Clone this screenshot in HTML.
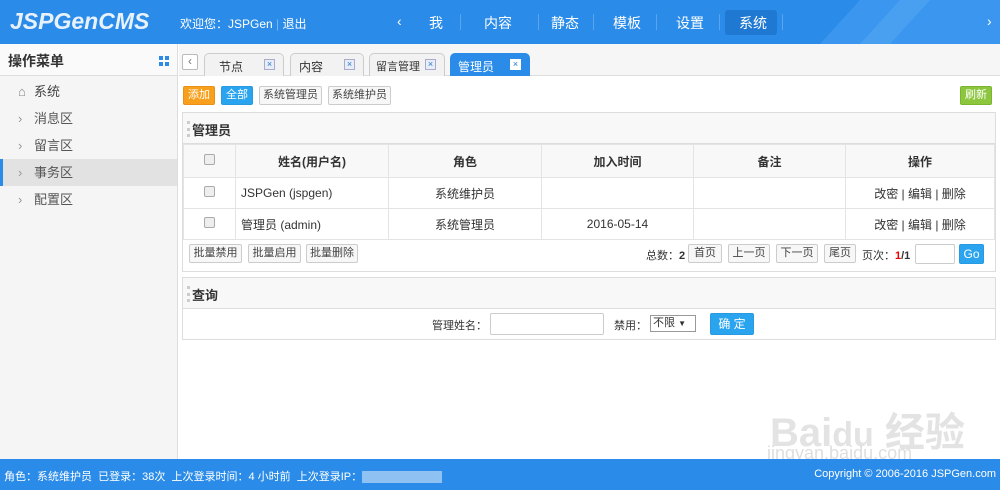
<!DOCTYPE html>
<html><head><meta charset="utf-8"><style>
*{margin:0;padding:0;box-sizing:border-box}
body{width:1000px;height:490px;overflow:hidden;font-family:"Liberation Sans","Noto Sans CJK SC",sans-serif;font-size:12px;color:#333;background:#fff;position:relative}
.hd{position:absolute;left:0;top:0;width:1000px;height:44px;background:#2a8be8;color:#fff;overflow:hidden}
.logo{position:absolute;left:10px;top:8px;font-size:23px;font-style:italic;font-weight:bold;color:#e8f2fc}
.nav a{position:absolute;top:13px;font-size:14px;color:#fff}
.sep{position:absolute;top:14px;width:1px;height:16px;background:#5ba5ee}
.side{position:absolute;left:0;top:44px;width:178px;height:415px;background:#f5f5f5;border-right:1px solid #ddd}
.sh{height:32px;border-bottom:1px solid #ddd;background:#fafafa;font-size:14px;font-weight:bold;padding:7px 8px}
.si{position:absolute;left:0;width:177px;height:27px;line-height:27px;padding-left:34px;font-size:13px;color:#555}
.si b{position:absolute;left:18px;font-weight:normal;color:#999}
.tabs{position:absolute;left:179px;top:44px;width:821px;height:32px;background:#f6f6f6;border-bottom:1px solid #ddd}
.tab{position:absolute;top:9px;height:23px;border:1px solid #ccc;border-bottom:none;border-radius:5px 5px 0 0;background:#f2f2f2;padding:4px 8px 0 30px;font-size:12px}
.tab i{position:absolute;right:8px;top:5px;width:11px;height:11px;border:1px solid #aac;background:#e8eef8;color:#27c;font-size:9px;line-height:9px;text-align:center;font-style:normal}
.btn{position:absolute;height:19px;line-height:17px;border:1px solid #ccc;border-radius:2px;background:#f7f7f7;font-size:11px;color:#444;text-align:center;white-space:nowrap;overflow:hidden}
.panel{position:absolute;left:182px;width:814px;border:1px solid #ddd}
.pt{height:31px;border-bottom:1px solid #ddd;background:#f8f8f8;font-size:13px;font-weight:bold;padding:7px 0 0 9px;position:relative}
.pt:before{content:"";position:absolute;left:4px;top:8px;height:16px;border-left:3px dotted #ccc}
table{border-collapse:collapse;width:100%}
td{border:1px solid #e4e4e4;text-align:center;height:31px;font-size:12px}
tr.h td{background:#f8f8f8;font-weight:bold;height:33px}
.cb{display:inline-block;width:11px;height:11px;border:1px solid #aaa;border-radius:2px;background:#eee}
.ft{position:absolute;left:0;top:459px;width:1000px;height:31px;background:#2a8be8;color:#fff;font-size:11px}
</style></head><body>
<div class="hd">
<svg style="position:absolute;left:800px;top:0" width="200" height="44"><polygon points="20,44 60,0 200,0 200,44" fill="#3a96ee"/><polygon points="60,44 100,0 130,0 90,44" fill="#4aa0f0"/></svg>
<div class="logo">JSPGenCMS</div>
<div style="position:absolute;left:180px;top:15px;font-size:12px">欢迎您：JSPGen <span style="color:#7bb8f2">|</span> 退出</div>
<div class="nav">
<a style="left:397px">‹</a><a style="left:429px">我</a><div class="sep" style="left:460px"></div>
<a style="left:484px">内容</a><div class="sep" style="left:538px"></div>
<a style="left:551px">静态</a><div class="sep" style="left:593px"></div>
<a style="left:613px">模板</a><div class="sep" style="left:656px"></div>
<a style="left:676px">设置</a><div class="sep" style="left:719px"></div>
<div style="position:absolute;left:725px;top:10px;width:52px;height:25px;background:#1f78d2;border-radius:3px"></div>
<a style="left:739px">系统</a><div class="sep" style="left:782px"></div>
<a style="left:987px">›</a></div>
</div>
<div class="side"><div class="sh">操作菜单<span style="position:absolute;left:159px;top:12px;width:10px;height:10px;background:linear-gradient(#fff,#fff) 4px 0/2px 10px no-repeat,linear-gradient(#fff,#fff) 0 4px/10px 2px no-repeat,#2a8be8"></span></div>
<div class="si" style="top:34px;color:#444"><b style="color:#888">⌂</b>系统</div>
<div class="si" style="top:61px"><b>›</b>消息区</div>
<div class="si" style="top:88px"><b>›</b>留言区</div>
<div class="si" style="top:115px;background:#e2e2e2;border-left:3px solid #2a8be8;padding-left:31px"><b style="left:15px">›</b>事务区</div>
<div class="si" style="top:142px"><b>›</b>配置区</div>
</div>
<div class="tabs">
<div style="position:absolute;left:3px;top:10px;width:16px;height:16px;border:1px solid #bbb;border-radius:2px;background:#fff;text-align:center;line-height:13px;color:#777">‹</div>
<div class="tab" style="left:25px;width:80px;padding-left:14px">节点<i>×</i></div>
<div class="tab" style="left:111px;width:74px;padding-left:8px">内容<i>×</i></div>
<div class="tab" style="left:190px;width:76px;padding-left:6px;font-size:11px">留言管理<i>×</i></div>
<div class="tab" style="left:271px;width:80px;padding-left:7px;background:#2a8be8;border-color:#2a8be8;color:#fff">管理员<i style="background:#fff;border-color:#fff">×</i></div>
</div>
<div class="btn" style="left:183px;top:86px;width:32px;background:#f8a01c;border-color:#e8901a;color:#fff">添加</div>
<div class="btn" style="left:221px;top:86px;width:32px;background:#2aa4ee;border-color:#2a9ae0;color:#fff">全部</div>
<div class="btn" style="left:259px;top:86px;width:63px">系统管理员</div>
<div class="btn" style="left:328px;top:86px;width:63px">系统维护员</div>
<div class="btn" style="left:960px;top:86px;width:32px;background:#8cc63e;border-color:#7ab530;color:#fff">刷新</div>
<div class="panel" style="top:112px;height:160px"><div class="pt">管理员</div>
<table><tr class="h"><td style="width:52px"><span class="cb"></span></td><td style="width:153px">姓名(用户名)</td><td style="width:153px">角色</td><td style="width:152px">加入时间</td><td style="width:152px">备注</td><td>操作</td></tr>
<tr><td><span class="cb"></span></td><td style="text-align:left;padding-left:5px">JSPGen (jspgen)</td><td>系统维护员</td><td></td><td></td><td>改密 | 编辑 | 删除</td></tr>
<tr><td><span class="cb"></span></td><td style="text-align:left;padding-left:5px">管理员 (admin)</td><td>系统管理员</td><td>2016-05-14</td><td></td><td>改密 | 编辑 | 删除</td></tr></table>
</div>
<div class="btn" style="left:189px;top:244px;width:53px">批量禁用</div>
<div class="btn" style="left:248px;top:244px;width:53px">批量启用</div>
<div class="btn" style="left:306px;top:244px;width:52px">批量删除</div>
<div style="position:absolute;left:646px;top:247px;font-size:11px">总数：<b>2</b></div>
<div class="btn" style="left:688px;top:244px;width:34px">首页</div>
<div class="btn" style="left:728px;top:244px;width:42px">上一页</div>
<div class="btn" style="left:776px;top:244px;width:42px">下一页</div>
<div class="btn" style="left:824px;top:244px;width:32px">尾页</div>
<div style="position:absolute;left:862px;top:247px;font-size:11px">页次：<b style="color:#e00">1</b><b>/1</b></div>
<div style="position:absolute;left:915px;top:244px;width:40px;height:20px;border:1px solid #ccc;border-radius:2px"></div>
<div class="btn" style="left:959px;top:244px;width:25px;height:20px;line-height:18px;background:#2aa4ee;border-color:#2a9ae0;color:#fff;font-size:12px">Go</div>
<div class="panel" style="top:277px;height:63px"><div class="pt">查询</div></div>
<div style="position:absolute;left:432px;top:317px;font-size:11px">管理姓名：</div>
<div style="position:absolute;left:490px;top:313px;width:114px;height:22px;border:1px solid #ccc;border-radius:2px"></div>
<div style="position:absolute;left:614px;top:317px;font-size:11px">禁用：</div>
<div style="position:absolute;left:650px;top:315px;width:46px;height:17px;border:1px solid #999;background:#fff;font-size:11px;padding-left:2px;line-height:15px">不限 <span style="font-size:8px">▼</span></div>
<div class="btn" style="left:710px;top:313px;width:44px;height:22px;line-height:20px;background:#2aa4ee;border-color:#2a9ae0;color:#fff;font-size:12px">确 定</div>
<div style="position:absolute;left:770px;top:400px;font-size:40px;color:rgba(200,200,200,.5);font-weight:bold">Bai<span style="font-size:34px">du</span> 经验</div>
<div style="position:absolute;left:767px;top:443px;font-size:18px;color:rgba(200,200,200,.6)">jingyan.baidu.com</div>
<div class="ft"><div style="position:absolute;left:4px;top:9px">角色：系统维护员 &nbsp;已登录：38次 &nbsp;上次登录时间：4 小时前 &nbsp;上次登录IP：<span style="display:inline-block;width:80px;height:12px;background:#8fc1f2;vertical-align:middle"></span></div>
<div style="position:absolute;right:4px;top:9px">Copyright © 2006-2016 JSPGen.com</div></div>
</body></html>
